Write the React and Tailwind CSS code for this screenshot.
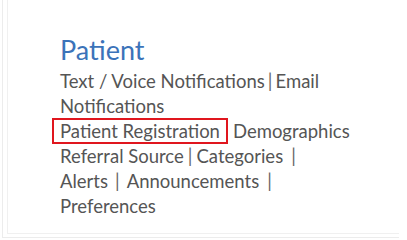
export default function App() {
  const Sep = ({ cls = 'mx-[4px]' }) => <span className={`${cls} text-[#666]`}>|</span>;
  return (
    <div className="w-[407px] h-[240px] bg-white overflow-hidden" style={{ fontFamily: 'Lato, sans-serif' }}>
      <div className="ml-[2px] w-[397px] h-[238px] border-l border-b border-[#ececec] pl-[4px] pb-[3px]">
        <div className="h-full border-l border-b border-[#f0f0f0] pl-[52px] pt-[30px]">
          <h2 className="text-[27px] leading-[39px] text-[#3b73b9]">Patient</h2>
          <div className="w-[320px] text-[18.5px] leading-[25px] text-[#555]">
            <a>Text / Voice Notifications</a><Sep cls="mx-[3px]" /><a>Email Notifications</a>
            <br />
            <span className="inline-block -ml-[8px] -my-[2px] px-[6px] border-[2.5px] border-[#e0161e] leading-[22px]">Patient Registration</span>
            <a className="ml-[5px]">Demographics</a>
            <br />
            <a>Referral Source</a><Sep /><a>Categories</a><Sep cls="ml-[8px]" />
            <br />
            <a>Alerts</a><Sep cls="mx-[7px]" /><a>Announcements</a><Sep cls="ml-[8px]" />
            <br />
            <a>Preferences</a>
          </div>
        </div>
      </div>
    </div>
  );
}
